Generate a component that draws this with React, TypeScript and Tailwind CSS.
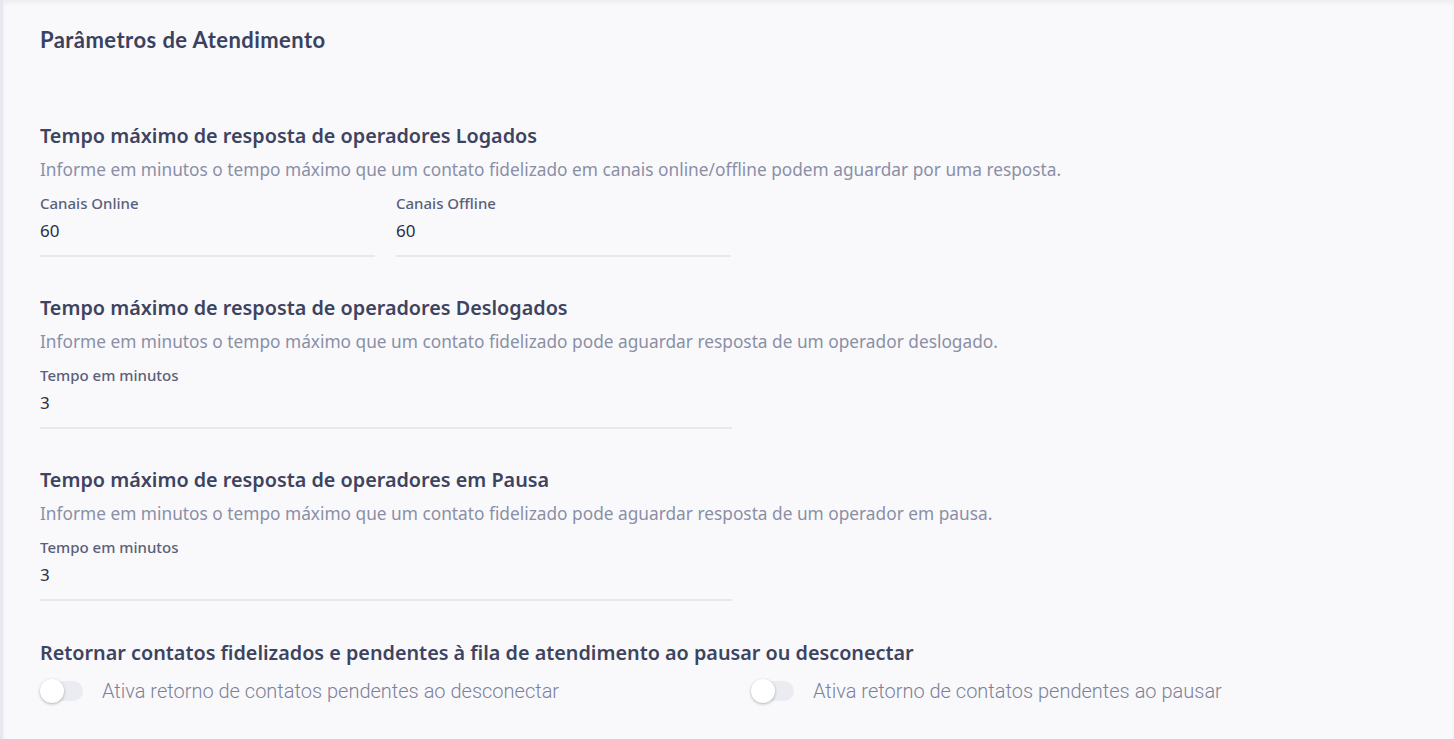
type Field = {
  label: string;
  value: string;
};

type Section = {
  title: string;
  description: string;
  fields: Field[];
  wide?: boolean;
};

const sections: Section[] = [
  {
    title: "Tempo máximo de resposta de operadores Logados",
    description:
      "Informe em minutos o tempo máximo que um contato fidelizado em canais online/offline podem aguardar por uma resposta.",
    fields: [
      { label: "Canais Online", value: "60" },
      { label: "Canais Offline", value: "60" },
    ],
  },
  {
    title: "Tempo máximo de resposta de operadores Deslogados",
    description:
      "Informe em minutos o tempo máximo que um contato fidelizado pode aguardar resposta de um operador deslogado.",
    fields: [{ label: "Tempo em minutos", value: "3" }],
    wide: true,
  },
  {
    title: "Tempo máximo de resposta de operadores em Pausa",
    description:
      "Informe em minutos o tempo máximo que um contato fidelizado pode aguardar resposta de um operador em pausa.",
    fields: [{ label: "Tempo em minutos", value: "3" }],
    wide: true,
  },
];

const Toggle = ({ label }: { label: string }) => (
  <label className="flex items-center gap-[19px] cursor-pointer">
    <span className="relative flex h-[24px] w-[43px] items-center">
      <span className="h-[20px] w-[43px] rounded-full bg-[#ebecf1]" />
      <span className="absolute left-0 top-0 h-[24px] w-[24px] rounded-full bg-white shadow-[0_1px_3px_rgba(40,44,70,0.35)]" />
    </span>
    <span className="text-[20px] leading-[24px] text-[#7c8198] font-['Roboto',sans-serif] font-light">
      {label}
    </span>
  </label>
);

const App = () => {
  return (
    <div className="min-h-screen bg-[#f9f9fc] border-l-[3px] border-[#e6e7ef] shadow-[inset_0_3px_4px_rgba(0,0,0,0.05)] font-['Noto_Sans',sans-serif]">
      <div className="pl-[37px] pt-[27px] pb-[30px]">
        <h1 className="text-[22px] leading-[26px] font-bold tracking-[0.45px] text-[#3b425f] font-['Lato',sans-serif]">
          Parâmetros de Atendimento
        </h1>

        <div className="mt-[71px] flex flex-col gap-[39px]">
          {sections.map((section) => (
            <div key={section.title}>
              <h2 className="text-[19.8px] leading-[24px] font-semibold text-[#3d445f]">
                {section.title}
              </h2>
              <p className="mt-[10px] text-[17.3px] leading-[24px] text-[#8a8fa6]">
                {section.description}
              </p>
              <div className="mt-[11px] flex gap-[21px]">
                {section.fields.map((field) => (
                  <div
                    key={field.label}
                    className={
                      section.wide
                        ? "w-[692px] border-b-2 border-[#e8e9ef] pb-[12px]"
                        : "w-[335px] border-b-2 border-[#e8e9ef] pb-[12px]"
                    }
                  >
                    <div className="text-[15px] leading-[20px] font-medium text-[#5a6079]">
                      {field.label}
                    </div>
                    <div className="mt-[6px] text-[17px] leading-[24px] text-[#2a2f47]">
                      {field.value}
                    </div>
                  </div>
                ))}
              </div>
            </div>
          ))}

          <div className="mt-[1px]">
            <h2 className="text-[19.8px] leading-[24px] font-semibold text-[#3d445f]">
              Retornar contatos fidelizados e pendentes à fila de atendimento ao pausar ou desconectar
            </h2>
            <div className="mt-[14px] flex">
              <div className="w-[711px]">
                <Toggle label="Ativa retorno de contatos pendentes ao desconectar" />
              </div>
              <Toggle label="Ativa retorno de contatos pendentes ao pausar" />
            </div>
          </div>
        </div>
      </div>
    </div>
  );
};

export default App;
